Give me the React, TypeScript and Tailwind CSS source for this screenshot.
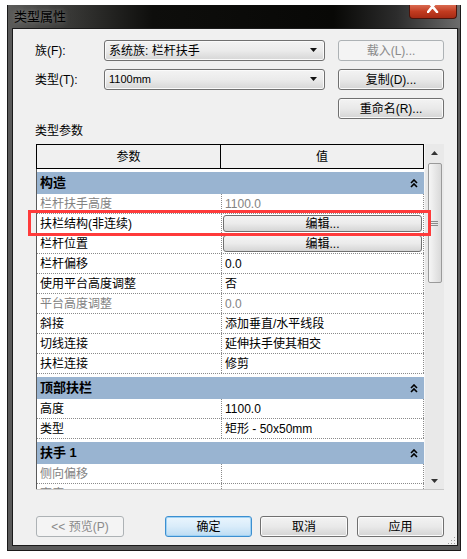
import React from 'react';

const UI = "font-['Liberation_Sans','Noto_Sans_CJK_SC',sans-serif]";

function Arrow() {
  return (
    <svg width="8" height="5" viewBox="0 0 8 5">
      <path d="M0 0 H7 L3.5 4 Z" fill="#111" />
    </svg>
  );
}

function Chevrons() {
  return (
    <svg width="8" height="9" viewBox="0 0 8 9">
      <path d="M1 4 L4 1 L7 4 M1 8 L4 5 L7 8" fill="none" stroke="#000" strokeWidth="1.6" />
    </svg>
  );
}

function Btn({ label, disabled, primary, w }: { label: string; disabled?: boolean; primary?: boolean; w: string }) {
  const base = 'h-[21px] flex items-center justify-center rounded-[3px] text-[12px] border';
  if (disabled)
    return <div className={`${base} ${w} border-[#adb2b5] bg-[#f4f4f4] text-[#8a8a8a]`}>{label}</div>;
  if (primary)
    return (
      <div className={`${base} ${w} border-[#3c8fd0] bg-gradient-to-b from-[#eaf5fd] via-[#d9ecfa] to-[#bcdcf3] text-black shadow-[inset_0_0_0_1px_#9fd2f5]`}>
        {label}
      </div>
    );
  return (
    <div className={`${base} ${w} border-[#707070] bg-gradient-to-b from-[#f3f3f3] via-[#e9e9e9] to-[#d4d4d4] text-black shadow-[inset_0_0_0_1px_#fafafa]`}>
      {label}
    </div>
  );
}

function Combo({ text, small }: { text: string; small?: boolean }) {
  return (
    <div className="w-[221px] h-[21px] flex items-center justify-between pl-[4px] pr-[6px] rounded-[3px] border border-[#707070] bg-gradient-to-b from-[#f3f3f3] via-[#ebebeb] to-[#d6d6d6] shadow-[inset_0_0_0_1px_#fafafa]">
      <span className={small ? 'text-[11px]' : 'text-[12px]'}>{text}</span>
      <Arrow />
    </div>
  );
}

function Band({ title }: { title: string }) {
  return (
    <div className="mt-[3px] h-[22px] bg-[#99b4d1] flex items-center justify-between pl-[3px] pr-[6px] text-[13px] font-bold text-black">
      <span>{title}</span>
      <Chevrons />
    </div>
  );
}

function Row({ name, value, dim, edit }: { name: string; value?: string; dim?: boolean; edit?: boolean }) {
  const c = dim ? 'text-[#828282]' : 'text-black';
  return (
    <div className="h-[20px] flex border-b border-dotted border-[#8a8a8a] text-[12px]">
      <div className={`w-[185px] shrink-0 flex items-center pl-[3px] border-r border-dotted border-[#8a8a8a] ${c}`}>{name}</div>
      <div className={`w-[202px] shrink-0 flex items-center border-r border-dotted border-[#8a8a8a] ${edit ? 'px-[1px]' : 'pl-[3px]'} ${c}`}>
        {edit ? (
          <div className="w-full h-[17px] flex items-center justify-center rounded-[3px] border border-[#707070] bg-gradient-to-b from-[#f4f4f4] via-[#ebebeb] to-[#d5d5d5]">
            编辑...
          </div>
        ) : (
          value
        )}
      </div>
    </div>
  );
}

export default function App() {
  return (
    <div className={`relative w-[467px] h-[559px] bg-white pt-[5px] pl-[7px] ${UI}`}>
      <div className="relative w-[454px] h-[546px] border-l border-r border-b border-[#1a1a1a] bg-[#5a5a5a] flex flex-col">
        {/* title bar */}
        <div className="h-[23px] flex items-center pl-[6px] bg-[linear-gradient(to_right,#5c5c5a_0%,#3c3c3a_12%,#0e0e0c_32%,#080806_72%,#2c2c2c_86%,#6c6c6c_100%)]">
          <span className="text-[13px] leading-none text-black [text-shadow:0_0_5px_rgba(200,200,200,0.5)]">类型属性</span>
        </div>

        {/* client area */}
        <div className="relative ml-[4px] w-[446px] h-[518px] border border-[#1a1a1a] bg-[#f0f0f0] text-black">
          <div className="pt-[11px] flex items-center h-[32px]">
            <div className="w-[91px] pl-[22px] text-[12px]">族(F):</div>
            <Combo text="系统族: 栏杆扶手" />
            <div className="ml-[13px]"><Btn label="载入(L)..." disabled w="w-[106px]" /></div>
          </div>
          <div className="mt-[8px] flex items-center h-[21px]">
            <div className="w-[91px] pl-[22px] text-[12px]">类型(T):</div>
            <Combo text="1100mm" small />
            <div className="ml-[13px]"><Btn label="复制(D)..." w="w-[106px]" /></div>
          </div>
          <div className="mt-[8px] pl-[325px] h-[21px]">
            <Btn label="重命名(R)..." w="w-[106px]" />
          </div>
          <div className="mt-[5px] pl-[22px] h-[14px] text-[12px] leading-[14px]">类型参数</div>

          {/* parameter table */}
          <div className="mt-[6px] ml-[23px] w-[408px] h-[346px] flex border-b border-[#c8c8c8]">
            <div className="w-[388px] flex flex-col">
              <div className="h-[25px] flex border border-black bg-[#f0f0f0] text-[12px]">
                <div className="w-[184px] flex items-center justify-center border-r border-black">参数</div>
                <div className="flex-1 flex items-center justify-center">值</div>
              </div>
              <div className="h-[320px] overflow-hidden border-l border-[#5a5a5a] bg-white">
                <Band title="构造" />
                <Row name="栏杆扶手高度" value="1100.0" dim />
                <Row name="扶栏结构(非连续)" edit />
                <Row name="栏杆位置" edit />
                <Row name="栏杆偏移" value="0.0" />
                <Row name="使用平台高度调整" value="否" />
                <Row name="平台高度调整" value="0.0" dim />
                <Row name="斜接" value="添加垂直/水平线段" />
                <Row name="切线连接" value="延伸扶手使其相交" />
                <Row name="扶栏连接" value="修剪" />
                <Band title="顶部扶栏" />
                <Row name="高度" value="1100.0" />
                <Row name="类型" value="矩形 - 50x50mm" />
                <Band title="扶手 1" />
                <Row name="侧向偏移" dim />
                <Row name="高度" dim />
              </div>
            </div>
            {/* scrollbar */}
            <div className="w-[20px] h-full bg-[#e9e9e9] border-l border-[#f6f6f6] flex flex-col items-center">
              <div className="h-[18px] flex items-center">
                <svg width="7" height="4" viewBox="0 0 7 4"><path d="M0 4 L3.5 0 L7 4 Z" fill="#333" /></svg>
              </div>
              <div className="mt-[1px] w-[14px] h-[120px] rounded-[2px] border border-[#9a9a9a] bg-gradient-to-r from-[#f6f6f6] to-[#d9d9d9] flex items-center justify-center">
                <div className="flex flex-col gap-[1px]">
                  <div className="w-[7px] h-px bg-[#8a8a8a]" />
                  <div className="w-[7px] h-px bg-[#8a8a8a]" />
                  <div className="w-[7px] h-px bg-[#8a8a8a]" />
                </div>
              </div>
              <div className="flex-1" />
              <div className="h-[16px] flex items-center">
                <svg width="7" height="4" viewBox="0 0 7 4"><path d="M0 0 H7 L3.5 4 Z" fill="#333" /></svg>
              </div>
            </div>
          </div>

          {/* bottom buttons */}
          <div className="mt-[26px] ml-[23px] flex items-center">
            <Btn label="<< 预览(P)" disabled w="w-[88px]" />
            <div className="ml-[41px]"><Btn label="确定" primary w="w-[87px]" /></div>
            <div className="ml-[8px]"><Btn label="取消" w="w-[88px]" /></div>
            <div className="ml-[9px]"><Btn label="应用" w="w-[87px]" /></div>
          </div>

          <svg className="absolute right-[1px] bottom-[0px]" width="10" height="10" viewBox="0 0 10 10">
            {[[8, 2], [8, 5], [5, 5], [8, 8], [5, 8], [2, 8]].map(([x, y], i) => (
              <rect key={i} x={x} y={y} width="1" height="1" fill="#9a9a9a" />
            ))}
          </svg>
        </div>

        {/* close button */}
        <div className="absolute left-[401px] top-0 w-[48px] h-[14px] rounded-b-[4px] border border-t-0 border-[#4a140c] bg-gradient-to-b from-[#d9694f] via-[#c23b20] to-[#a62a14] flex items-start justify-center overflow-hidden">
          <svg width="12" height="8" viewBox="0 0 12 8">
            <path d="M1 -4 L10 7 M10 -4 L1 7" stroke="#fff" strokeWidth="2.6" strokeLinecap="round" />
          </svg>
        </div>
      </div>

      {/* highlight */}
      <div className="absolute left-[28px] top-[210px] w-[403px] h-[26px] border-[3px] border-[#ff3b3b]" />
    </div>
  );
}
